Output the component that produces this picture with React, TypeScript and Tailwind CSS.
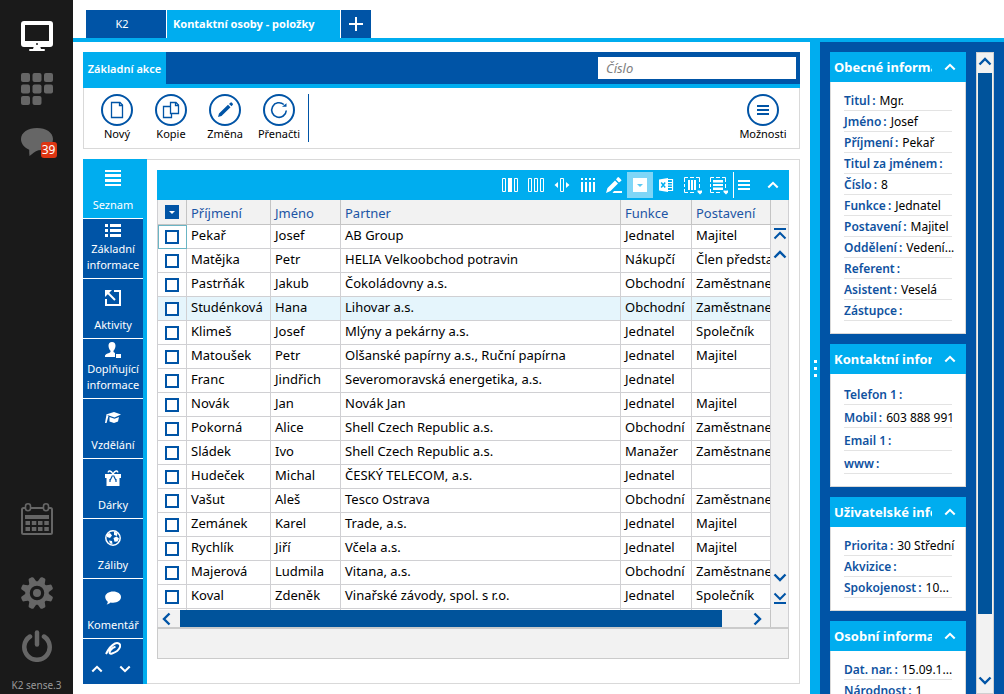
import React from "react";

/* ---------- shared icons ---------- */

const PATHS = {
  up: "M1.5 7.5 L7 2 L12.5 7.5",
  down: "M1.5 1.5 L7 7 L12.5 1.5",
  left: "M7.5 1.5 L2 7 L7.5 12.5",
  right: "M1.5 1.5 L7 7 L1.5 12.5",
};

function Chevron({ dir, className = "" }: { dir: keyof typeof PATHS; className?: string }) {
  const box = dir === "up" || dir === "down" ? "0 0 14 9" : "0 0 9 14";
  return (
    <svg viewBox={box} className={className} fill="none" stroke="currentColor" strokeWidth="2.4">
      <path d={PATHS[dir]} />
    </svg>
  );
}

/* ---------- left dock ---------- */

const MonitorIcon = () => (
  <svg viewBox="0 0 32 30" className="h-[30px] w-8" fill="#fff">
    <path fillRule="evenodd" d="M3 0h26a3 3 0 0 1 3 3v20a3 3 0 0 1-3 3H3a3 3 0 0 1-3-3V3a3 3 0 0 1 3-3zM4 4v16h24V4z" />
    <path d="M13 25h6l1 3h-8z" />
    <rect x="8" y="28" width="16" height="2" rx="1" />
    <circle cx="16" cy="23" r="1" fill="#1a1a1a" />
  </svg>
);

const TilesIcon = () => (
  <svg viewBox="0 0 32 32" className="size-8" fill="#666">
    {[[0, 0], [11.5, 0], [23, 0], [0, 11.5], [11.5, 11.5], [23, 11.5], [0, 23], [11.5, 23]].map(([x, y]) => (
      <rect key={`${x}-${y}`} x={x} y={y} width="9" height="9" rx="2" />
    ))}
  </svg>
);

const ChatIcon = () => (
  <svg viewBox="0 0 32 28" className="h-7 w-8" fill="#666">
    <path d="M16 0c9 0 16 4.500 16 11s-6 11-14.500 11.200C14 23 11 26 8.500 28c-.3-2-.3-4-.3-6.300C3 19.500 0 15.500 0 11 0 4.500 7 0 16 0z" />
  </svg>
);

const CalendarIcon = () => (
  <svg viewBox="0 0 32 32" className="size-8">
    <rect x="1" y="5" width="30" height="26" rx="1.500" fill="none" stroke="#666" strokeWidth="2" />
    <rect x="4.500" y="0.800" width="5" height="7" rx="2.500" fill="#1a1a1a" stroke="#666" strokeWidth="1.600" />
    <rect x="22.500" y="0.800" width="5" height="7" rx="2.500" fill="#1a1a1a" stroke="#666" strokeWidth="1.600" />
    <rect x="4" y="12" width="24" height="4" fill="#666" />
    {[4.5, 10.8, 17, 23.3].map((x) => (
      <g key={x} fill="#666">
        <rect x={x} y="18" width="4.500" height="4" />
        <rect x={x} y="24" width="4.500" height="4" />
      </g>
    ))}
  </svg>
);

const GearIcon = () => (
  <svg viewBox="-16 -16 32 32" className="size-8" fill="#666">
    {[0, 45, 90, 135, 180, 225, 270, 315].map((a) => (
      <path key={a} d="M-4 -10 L-2.800 -15 Q-2.600 -16.500 -1 -16.500 L1 -16.500 Q2.600 -16.500 2.800 -15 L4 -10z" transform={`rotate(${a + 22.5})`} />
    ))}
    <circle r="9.500" fill="none" stroke="#666" strokeWidth="4.500" />
    <circle r="4" />
  </svg>
);

const PowerIcon = () => (
  <svg viewBox="0 0 30 32" className="h-8 w-[30px]" fill="none" stroke="#666" strokeWidth="4.500" strokeLinecap="round">
    <path d="M8 6.500a12.700 12.700 0 1 0 14 0" />
    <path d="M15 2.500v12" />
  </svg>
);

/* ---------- action icons ---------- */

const NewIcon = () => (
  <svg viewBox="0 0 32 32" className="size-8" fill="none" stroke="#0054a6" strokeWidth="1.300">
    <circle cx="16" cy="16" r="15" strokeWidth="2" />
    <path d="M10.500 8.500h8.500l2.500 2.500v12.500h-11z" />
    <path d="M18.500 8v3.500h3" />
  </svg>
);

const CopyIcon = () => (
  <svg viewBox="0 0 32 32" className="size-8" fill="none" stroke="#0054a6" strokeWidth="1.300">
    <circle cx="16" cy="16" r="15" strokeWidth="2" />
    <path d="M15.500 12.500h-7v11h8v-4" />
    <path d="M15.500 8.500h5.500l2.500 2.500v8.500h-8z" />
    <path d="M20.500 8v3.500h3" />
  </svg>
);

const EditIcon = () => (
  <svg viewBox="0 0 32 32" className="size-8">
    <circle cx="16" cy="16" r="15" fill="none" stroke="#0054a6" strokeWidth="2" />
    <path d="M9 23l1-3.500 9-8.700 2.500 2.500-9 8.700zM20 10l1.300-1.200a1.200 1.200 0 0 1 1.700 0l.6.6a1.200 1.200 0 0 1 0 1.700L22.500 12.300z" fill="#0054a6" />
  </svg>
);

const RefreshIcon = () => (
  <svg viewBox="0 0 32 32" className="size-8" fill="none" stroke="#0054a6" strokeWidth="1.600">
    <circle cx="16" cy="16" r="15" strokeWidth="2" />
    <path d="M23.300 16.500a7.300 7.300 0 1 1-2.500-6" />
    <path d="M19 12.800h4.500v-3.500z" fill="#0054a6" stroke="none" />
  </svg>
);

const OptionsIcon = () => (
  <svg viewBox="0 0 32 32" className="size-8" fill="#0054a6">
    <circle cx="16" cy="16" r="15" fill="none" stroke="#0054a6" strokeWidth="2" />
    <path d="M10 11h12v2H10zM10 15h12v2H10zM10 19h12v2H10z" />
  </svg>
);

/* ---------- section icons ---------- */

const svg16 = "size-4";

const ListIcon = () => (
  <svg viewBox="0 0 16 16" className={svg16} fill="#fff">
    <path d="M0 0h16v2H0zM0 4h16v3H0zM0 9h16v3H0zM0 14h16v2H0z" />
  </svg>
);
const BulletsIcon = () => (
  <svg viewBox="0 0 16 16" className={svg16} fill="#fff">
    <path d="M0 2h3v3H0zM5 2h11v3H5zM0 7h3v3H0zM5 7h11v3H5zM0 12h3v3H0zM5 12h11v3H5z" />
  </svg>
);
const ActivityIcon = () => (
  <svg viewBox="0 0 16 16" className={svg16} fill="none" stroke="#fff" strokeWidth="2">
    <path d="M9 1h6v14H1V9" />
    <path d="M3 3l7 7" />
    <path d="M0 0h7L0 7z" fill="#fff" stroke="none" />
  </svg>
);
const PersonIcon = () => (
  <svg viewBox="0 0 16 16" className={svg16} fill="#fff">
    <path d="M7 0c2.300 0 3.500 1.600 3.500 3.800C10.500 6 9.300 8 8.500 8.700v1.300L10 11v4H0v-1.500C1 11.500 4 11.500 5.500 10V8.700C4.700 8 3.500 6 3.500 3.800 3.500 1.600 4.700 0 7 0z" />
    <path d="M11 12h5v4h-5z" />
  </svg>
);
const CapIcon = () => (
  <svg viewBox="0 0 16 16" className={svg16} fill="#fff">
    <path d="M1 4.500L9 2l7 2.500L9.500 7.500z" />
    <path d="M4.500 7l5 1.700L14 7l-1 4.500L9 13l-4.500-1.500z" />
    <path d="M1.500 4.500L3.500 6 1.500 13H0z" />
  </svg>
);
const GiftIcon = () => (
  <svg viewBox="0 0 16 16" className={svg16} fill="#fff">
    <path d="M0 4h16v4H0z" />
    <path d="M1.500 8h13v8h-13z" />
    <path d="M8 4C6 .5 3 0 3.500 2.500M8 4c2-3.500 5-4 4.500-1.500" fill="none" stroke="#fff" strokeWidth="1.500" />
    <path d="M7.500 5.500l-2.500 5M8.500 5.500l2.500 5M5 9v3M11 9v3" fill="none" stroke="#0054a6" strokeWidth="1.200" />
  </svg>
);
const BallIcon = () => (
  <svg viewBox="0 0 16 16" className={svg16} fill="#fff">
    <circle cx="8" cy="8" r="7.200" fill="none" stroke="#fff" strokeWidth="1.500" />
    <path d="M2 4l3-1 2 2.500L5 8 2 7zM9 1.500l3.500 1.500L12 6 9 5zM8.500 8l3-1.500 2.500 2-1.500 3-3 .3zM4 10.500l3 .5.500 3L5 13.500z" />
  </svg>
);
const CommentIcon = () => (
  <svg viewBox="0 0 16 16" className={svg16} fill="#fff">
    <path d="M8.200 1.500c4.500 0 7.800 2.400 7.800 5.500s-3.300 5.700-7.800 5.700c-1 0-1.900-.1-2.700-.3C4.500 13.500 3 14 1.500 14.500c.8-.8 1.300-1.700 1.300-2.800C1.300 10.500.2 8.900.2 7c0-3.100 3.500-5.500 8-5.500z" />
  </svg>
);
const ClipIcon = () => (
  <svg viewBox="0 0 16 13" className="h-[13px] w-4" fill="none" stroke="#fff" strokeWidth="2">
    <path d="M1 12c2-4 5-8.500 9-10.500 3-1.300 6 .5 5 3.500s-5 5.500-8 6.500-3-1.500-1-3.800 3-2.700 4.500-3" />
  </svg>
);

/* ---------- grid toolbar icons ---------- */

const gridIcon = "size-4";

const gridTools: { label: string; icon: React.ReactNode; active?: boolean }[] = [
  {
    label: "Pevný sloupec",
    icon: (
      <svg viewBox="0 0 16 16" className={gridIcon} fill="none" stroke="#fff">
        <path d="M.5 1.500h3v13h-3zM12.500 1.500h3v13h-3z" />
        <path d="M6 1h4v14H6z" fill="#fff" stroke="none" />
      </svg>
    ),
  },
  {
    label: "Sloupce",
    icon: (
      <svg viewBox="0 0 16 16" className={gridIcon} fill="none" stroke="#fff">
        <path d="M.5 1.500h3v13h-3zM6.500 1.500h3v13h-3zM12.500 1.500h3v13h-3z" />
      </svg>
    ),
  },
  {
    label: "Šířka sloupce",
    icon: (
      <svg viewBox="0 0 16 16" className={gridIcon} fill="none" stroke="#fff">
        <path d="M6.500 1.500h3v13h-3z" />
        <path d="M4 5v6L.5 8zM12 5v6l3.500-3z" fill="#fff" stroke="none" />
      </svg>
    ),
  },
  {
    label: "Čáry",
    icon: (
      <svg viewBox="0 0 16 16" className={gridIcon} fill="#fff">
        <path d="M1 1h2v2H1zM1 5h2v10H1zM5 1h2v2H5zM5 5h2v10H5zM9 1h2v2H9zM9 5h2v10H9zM13 1h2v2h-2zM13 5h2v10h-2z" />
      </svg>
    ),
  },
  {
    label: "Upravit",
    icon: (
      <svg viewBox="0 0 16 16" className={gridIcon} fill="#fff">
        <path d="M0 16l1.500-5L9 3.500l3 3-7.500 7.500zM10 2.500l1.500-2a1 1 0 0 1 1.500 0L15 2.500a1 1 0 0 1 0 1.500l-2 1.500zM8 14h8v2H6.500z" />
      </svg>
    ),
  },
  {
    label: "Filtr",
    active: true,
    icon: (
      <svg viewBox="0 0 16 16" className={gridIcon}>
        <path d="M1 1h14v14H1z" fill="#fff" />
        <path d="M5 7h6l-3 3z" fill="#5cc9f3" />
      </svg>
    ),
  },
  {
    label: "Excel",
    icon: (
      <svg viewBox="0 0 16 16" className={gridIcon} fill="#fff">
        <path d="M1 2.500L10 1v14L1 13.500z" />
        <path d="M10 2.500h4.500v11H10M10 5.500h4M10 8h4M10 10.500h4" fill="none" stroke="#fff" strokeWidth="1.200" />
        <path d="M3.200 5.500l4 5M7.200 5.500l-4 5" stroke="#00adef" strokeWidth="1.500" />
      </svg>
    ),
  },
  {
    label: "Výběr sloupců",
    icon: (
      <svg viewBox="0 0 20 20" className="size-5" fill="#fff">
        <path d="M2.500 7V2.500H6M8 2.500h4M14 2.500h3.500V7M17.500 9v4M2.500 9v3M2.500 14v3.500H6M8 17.500h4" fill="none" stroke="#fff" />
        <path d="M6 5h2v10H6zM9 5h2v10H9zM12 5h2v10h-2z" />
        <path d="M18 19.500l-2.500-2.500v-1.500h2l.5.500.5-.5h2V17z" />
      </svg>
    ),
  },
  {
    label: "Výběr řádků",
    icon: (
      <svg viewBox="0 0 20 20" className="size-5" fill="#fff">
        <path d="M2.500 7V2.500H6M8 2.500h4M14 2.500h3.500V7M17.500 9v4M2.500 9v3M2.500 14v3.500H6M8 17.500h4" fill="none" stroke="#fff" />
        <path d="M5 5h10v2.500H5zM5 9h10v2H5zM5 12.500h10V15H5z" />
        <path d="M18 19.500l-2.500-2.500v-1.500h2l.5.500.5-.5h2V17z" />
      </svg>
    ),
  },
];

/* ---------- data ---------- */

const sections: { lines: string[]; icon: React.ReactNode; active?: boolean }[] = [
  { lines: ["Seznam"], icon: <ListIcon />, active: true },
  { lines: ["Základní", "informace"], icon: <BulletsIcon /> },
  { lines: ["Aktivity"], icon: <ActivityIcon /> },
  { lines: ["Doplňující", "informace"], icon: <PersonIcon /> },
  { lines: ["Vzdělání"], icon: <CapIcon /> },
  { lines: ["Dárky"], icon: <GiftIcon /> },
  { lines: ["Záliby"], icon: <BallIcon /> },
  { lines: ["Komentář"], icon: <CommentIcon /> },
];

const actions = [
  { label: "Nový", icon: <NewIcon /> },
  { label: "Kopie", icon: <CopyIcon /> },
  { label: "Změna", icon: <EditIcon /> },
  { label: "Přenačti", icon: <RefreshIcon /> },
];

const columns = ["Příjmení", "Jméno", "Partner", "Funkce", "Postavení"];

const rows = [
  ["Pekař", "Josef", "AB Group", "Jednatel", "Majitel"],
  ["Matějka", "Petr", "HELIA Velkoobchod potravin", "Nákupčí", "Člen představenstva"],
  ["Pastrňák", "Jakub", "Čokoládovny a.s.", "Obchodní", "Zaměstnanec"],
  ["Studénková", "Hana", "Lihovar a.s.", "Obchodní", "Zaměstnanec"],
  ["Klimeš", "Josef", "Mlýny a pekárny a.s.", "Jednatel", "Společník"],
  ["Matoušek", "Petr", "Olšanské papírny a.s., Ruční papírna", "Jednatel", "Majitel"],
  ["Franc", "Jindřich", "Severomoravská energetika, a.s.", "Jednatel", ""],
  ["Novák", "Jan", "Novák Jan", "Jednatel", "Majitel"],
  ["Pokorná", "Alice", "Shell Czech Republic a.s.", "Obchodní", "Zaměstnanec"],
  ["Sládek", "Ivo", "Shell Czech Republic a.s.", "Manažer", "Zaměstnanec"],
  ["Hudeček", "Michal", "ČESKÝ TELECOM, a.s.", "Jednatel", ""],
  ["Vašut", "Aleš", "Tesco Ostrava", "Obchodní", "Zaměstnanec"],
  ["Zemánek", "Karel", "Trade, a.s.", "Jednatel", "Majitel"],
  ["Rychlík", "Jiří", "Včela a.s.", "Jednatel", "Majitel"],
  ["Majerová", "Ludmila", "Vitana, a.s.", "Obchodní", "Zaměstnanec"],
  ["Koval", "Zdeněk", "Vinařské závody, spol. s r.o.", "Jednatel", "Společník"],
];

type Card = { title: string; tall?: boolean; fields: [string, string][] };

const cards: Card[] = [
  {
    title: "Obecné informace",
    fields: [
      ["Titul", "Mgr."],
      ["Jméno", "Josef"],
      ["Příjmení", "Pekař"],
      ["Titul za jménem", ""],
      ["Číslo", "8"],
      ["Funkce", "Jednatel"],
      ["Postavení", "Majitel"],
      ["Oddělení", "Vedení..."],
      ["Referent", ""],
      ["Asistent", "Veselá"],
      ["Zástupce", ""],
    ],
  },
  {
    title: "Kontaktní informace",
    tall: true,
    fields: [
      ["Telefon 1", ""],
      ["Mobil", "603 888 991"],
      ["Email 1", ""],
      ["www", ""],
    ],
  },
  {
    title: "Uživatelské informace",
    fields: [
      ["Priorita", "30 Střední"],
      ["Akvizice", ""],
      ["Spokojenost", "10..."],
    ],
  },
  {
    title: "Osobní informace",
    fields: [
      ["Dat. nar.", "15.09.1..."],
      ["Národnost", "1"],
    ],
  },
];

/* ---------- regions ---------- */

function Dock() {
  return (
    <nav className="flex w-[73px] shrink-0 flex-col items-center bg-[#1a1a1a] pt-[21px]">
      <button aria-label="Plocha"><MonitorIcon /></button>
      <button aria-label="Moduly" className="mt-[22px]"><TilesIcon /></button>
      <button aria-label="Zprávy" className="relative mt-[23px]">
        <ChatIcon />
        <span className="absolute -right-1 top-3.5 flex size-4 items-center justify-center rounded-[3px] bg-[#dc3512] text-xs leading-4 text-white">
          39
        </span>
      </button>
      <button aria-label="Kalendář" className="mt-auto"><CalendarIcon /></button>
      <button aria-label="Nastavení" className="mt-[42px]"><GearIcon /></button>
      <button aria-label="Vypnout" className="mt-[21px]"><PowerIcon /></button>
      <span className="mt-[15px] pb-px text-[10px] leading-4 text-[#999]">K2 sense.3</span>
    </nav>
  );
}

function TabStrip() {
  return (
    <header className="flex gap-px border-b-4 border-[#00adef] pl-[13px] pt-2.5 text-[11px] text-white">
      <button className="h-7 w-20 bg-[#0054a6] pr-2">K2</button>
      <button className="h-7 w-[173px] bg-[#00adef] pl-1.5 text-left font-bold">Kontaktní osoby - položky</button>
      <button aria-label="Nová záložka" className="flex h-7 w-[30px] items-center justify-center bg-[#0054a6]">
        <svg viewBox="0 0 14 14" className="size-3.5" stroke="#fff" strokeWidth="2">
          <path d="M0 7h14M7 0v14" />
        </svg>
      </button>
    </header>
  );
}

function ActionBar() {
  return (
    <section>
      <div className="flex h-9 border-b-4 border-[#00adef] bg-[#0054a6]">
        <button className="-mb-1 w-[83px] bg-[#00adef] pb-0.5 text-[11px] font-semibold text-white">Základní akce</button>
        <input
          aria-label="Číslo"
          placeholder="Číslo"
          className="ml-auto mr-1 mt-[5px] h-[22px] w-[198px] bg-white px-2 text-[13px] italic outline-none placeholder:text-[#808080]"
        />
      </div>
      <div className="flex h-[61px] border border-t-0 border-[#d9d9d9] pl-1.5 pr-2 pt-1.5 text-[11px] text-black">
        {actions.map((a) => (
          <button key={a.label} className="flex w-[54px] flex-col items-center leading-4">
            {a.icon}
            {a.label}
          </button>
        ))}
        <div className="ml-0.5 h-12 w-px bg-[#0054a6]" />
        <button className="ml-auto flex w-14 flex-col items-center leading-4">
          <OptionsIcon />
          Možnosti
        </button>
      </div>
    </section>
  );
}

function SectionNav() {
  return (
    <nav className="-my-px -ml-px flex w-16 shrink-0 flex-col border-r-4 border-[#00adef] bg-[#0054a6] text-[11px] text-white">
      {sections.map((s) => (
        <button
          key={s.lines[0]}
          className={`flex h-[60px] flex-col items-center justify-between border-b border-white pb-[5px] leading-4 ${
            s.active ? "bg-[#00adef]" : ""
          } ${s.lines.length > 1 ? "pt-[3px]" : "pt-[11px]"}`}
        >
          {s.icon}
          <span>
            {s.lines.map((l) => (
              <span key={l} className="block">{l}</span>
            ))}
          </span>
        </button>
      ))}
      <div className="flex grow flex-col items-center gap-2.5 pt-[3px]">
        <ClipIcon />
        <div className="flex gap-4 pr-1">
          <button aria-label="Nahoru"><Chevron dir="up" className="h-2 w-3" /></button>
          <button aria-label="Dolů"><Chevron dir="down" className="h-2 w-3" /></button>
        </div>
      </div>
    </nav>
  );
}

function EdgeChevron({ dir }: { dir: "up" | "down" }) {
  return (
    <svg viewBox="0 0 14 12" className="h-3 w-3.5" fill="none" stroke="#0054a6" strokeWidth="2">
      <path d={dir === "up" ? "M1 1h12M1.500 10.500L7 5l5.500 5.500" : "M1 11h12M1.500 1.500L7 7l5.500-5.500"} />
    </svg>
  );
}

function ContactGrid() {
  const cell = "overflow-hidden whitespace-nowrap border-b border-r border-[#d0d0d3] p-0 pl-1 align-top";
  return (
    <section className="mx-2.5 mb-6 mt-2.5 flex min-w-0 grow flex-col">
      <div className="flex h-[30px] shrink-0 items-center justify-end bg-[#00adef] text-white">
        {gridTools.map((t) => (
          <button
            key={t.label}
            aria-label={t.label}
            className={`flex size-[26px] items-center justify-center ${t.active ? "bg-[#7fd6f7]" : ""}`}
          >
            {t.icon}
          </button>
        ))}
        <div className="ml-0.5 h-[26px] w-px bg-white" />
        <button aria-label="Nabídka" className="flex w-5 justify-center">
          <svg viewBox="0 0 12 10" className="h-2.5 w-3" fill="#fff">
            <path d="M0 0h12v2H0zM0 4h12v2H0zM0 8h12v2H0z" />
          </svg>
        </button>
        <button aria-label="Sbalit" className="ml-[3px] flex w-8 justify-center">
          <Chevron dir="up" className="h-2 w-3" />
        </button>
      </div>

      <div className="flex min-h-0 grow border-x border-[#d0d0d3]">
        <div className="flex min-w-0 grow flex-col">
          <div className="min-h-0 grow basis-0 overflow-hidden">
            <table className="w-full table-fixed border-separate border-spacing-0 text-[13px] leading-5 text-black">
              <colgroup>
                <col className="w-[29px]" />
                <col className="w-[84px]" />
                <col className="w-[70px]" />
                <col />
                <col className="w-[71px]" />
                <col className="w-[79px]" />
              </colgroup>
              <thead className="bg-[#f2f2f2]">
                <tr className="h-[25px]">
                  <th className="border-b border-r border-[#c4c4c4] p-0">
                    <button aria-label="Výběr" className="mx-auto flex size-3.5 items-center justify-center bg-[#0054a6]">
                      <svg viewBox="0 0 6 3" className="h-[3px] w-1.5" fill="#fff">
                        <path d="M0 0h6L3 3z" />
                      </svg>
                    </button>
                  </th>
                  {columns.map((c) => (
                    <th key={c} className="border-b border-r border-[#c4c4c4] p-0 pl-1 pt-0.5 text-left font-normal text-[#1c55a5]">
                      {c}
                    </th>
                  ))}
                </tr>
              </thead>
              <tbody>
                {rows.map((r, i) => (
                  <tr key={r[0]} className={`h-6 ${i === 3 ? "bg-[#e5f5fc]" : ""}`}>
                    <td className={`border-b border-r border-[#d0d0d3] p-0 ${i === 0 ? "outline outline-1 -outline-offset-1 outline-[#6bb5c4]" : ""}`}>
                      <input
                        type="checkbox"
                        aria-label={r[0]}
                        className="mx-auto block size-3.5 appearance-none border-2 border-[#0054a6] bg-white"
                      />
                    </td>
                    {r.map((v, j) => (
                      <td key={j} className={cell}>{v}</td>
                    ))}
                  </tr>
                ))}
                <tr className="h-6" aria-hidden="true">
                  {[0, 1, 2, 3, 4, 5].map((j) => (
                    <td key={j} className={cell} />
                  ))}
                </tr>
              </tbody>
            </table>
          </div>
          <div className="flex h-[17px] shrink-0 border-r border-[#c4c4c4] bg-[#f2f2f2] text-[#0054a6]">
            <button aria-label="Vlevo" className="flex w-[22px] items-center pl-1">
              <Chevron dir="left" className="h-3.5 w-[9px]" />
            </button>
            <div className="grow bg-[#00539b]" />
            <button aria-label="Vpravo" className="flex w-12 items-center justify-end pr-2">
              <Chevron dir="right" className="h-3.5 w-[9px]" />
            </button>
          </div>
        </div>
        <div className="flex w-[17px] shrink-0 flex-col bg-[#f2f2f2] text-[#0054a6]">
          <div className="h-[25px] border-b border-[#c4c4c4]" />
          <div className="flex grow flex-col items-center pb-[23px] pt-[3px]">
            <button aria-label="Na začátek"><EdgeChevron dir="up" /></button>
            <button aria-label="O řádek výš" className="mt-2.5"><Chevron dir="up" className="h-[9px] w-3.5" /></button>
            <button aria-label="O řádek níž" className="mt-auto"><Chevron dir="down" className="h-[9px] w-3.5" /></button>
            <button aria-label="Na konec" className="mt-2.5"><EdgeChevron dir="down" /></button>
          </div>
        </div>
      </div>
      <div className="h-8 shrink-0 border border-t-2 border-[#cbcbcb] bg-[#f2f2f2]" />
    </section>
  );
}

function InfoCard({ card }: { card: Card }) {
  return (
    <section className="shrink-0">
      <div className="flex h-[30px] items-center bg-[#00adef] pl-1 text-white">
        <h2 className="w-[98px] overflow-hidden whitespace-nowrap pt-0.5 text-[13px] font-bold">{card.title}</h2>
        <button aria-label="Sbalit" className="ml-3"><Chevron dir="up" className="h-2 w-3" /></button>
      </div>
      <dl className="border border-t-0 border-[#d9d9d9] bg-white px-[13px] pb-3 pt-2 text-xs">
        {card.fields.map(([k, v]) => (
          <div
            key={k}
            className={`flex items-center gap-1 whitespace-nowrap border-b border-[#e3e3e3] ${
              card.tall ? "h-[23px] pt-1" : "h-[21px] pt-0.5"
            }`}
          >
            <dt className="flex gap-0.5 font-semibold text-[#0f52a0]">
              {k}
              <span>:</span>
            </dt>
            <dd className="text-black">{v}</dd>
          </div>
        ))}
      </dl>
    </section>
  );
}

function InfoPanel() {
  return (
    <aside className="flex w-[194px] shrink-0 bg-[#0054a6]">
      <div className="flex w-2.5 flex-col items-center justify-center gap-1 bg-[#00adef]">
        <i className="size-[3px] bg-white" />
        <i className="size-[3px] bg-white" />
        <i className="size-[3px] bg-white" />
      </div>
      <div className="ml-2.5 flex w-[136px] flex-col gap-2.5 overflow-hidden pt-2.5">
        {cards.map((c) => (
          <InfoCard key={c.title} card={c} />
        ))}
      </div>
      <div className="ml-2.5 mt-2.5 flex w-[18px] flex-col border border-[#d0d0d0] bg-[#f2f2f2] text-[#0054a6]">
        <button aria-label="Nahoru" className="flex h-5 items-center justify-center pb-1"><Chevron dir="up" className="h-[9px] w-3.5" /></button>
        <div className="mx-px grow bg-[#00539b]" />
        <button aria-label="Dolů" className="flex h-[79px] items-end justify-center pb-2"><Chevron dir="down" className="h-[9px] w-3.5" /></button>
      </div>
    </aside>
  );
}

export default function App() {
  return (
    <div className="flex h-screen overflow-hidden bg-white font-['Noto_Sans','Open_Sans',sans-serif]">
      <Dock />
      <div className="flex min-w-0 grow flex-col">
        <TabStrip />
        <div className="flex min-h-0 grow">
          <main className="flex min-w-0 grow flex-col gap-2.5 p-2.5">
            <ActionBar />
            <div className="flex min-h-0 grow border border-[#d9d9d9]">
              <SectionNav />
              <ContactGrid />
            </div>
          </main>
          <InfoPanel />
        </div>
      </div>
    </div>
  );
}
